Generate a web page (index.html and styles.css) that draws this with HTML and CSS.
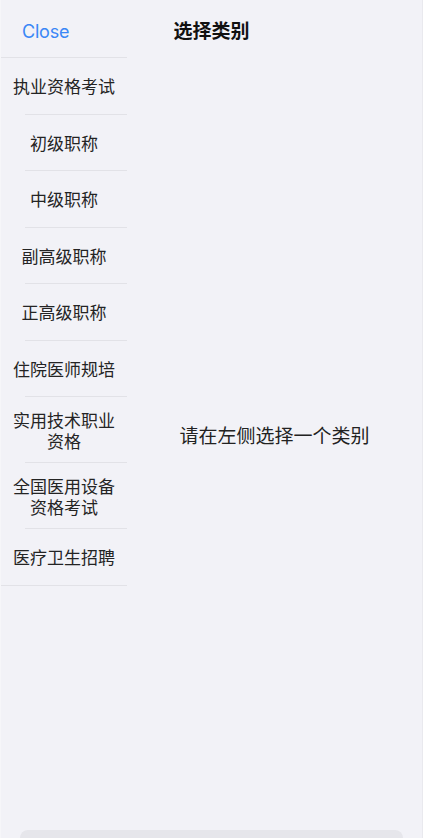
FILE: index.html
```html
<!DOCTYPE html>
<html lang="zh-CN">
<head>
<meta charset="utf-8">
<title>选择类别</title>
<link rel="stylesheet" href="styles.css">
</head>
<body>
<div class="screen">
  <header class="nav">
    <a class="close">Close</a>
    <h1 class="title">选择类别</h1>
    <span class="spacer"></span>
  </header>
  <main class="body">
    <ul class="cats">
      <li class="cat">执业资格考试</li>
      <li class="cat">初级职称</li>
      <li class="cat">中级职称</li>
      <li class="cat">副高级职称</li>
      <li class="cat">正高级职称</li>
      <li class="cat">住院医师规培</li>
      <li class="cat tall">实用技术职业<br>资格</li>
      <li class="cat tall">全国医用设备<br>资格考试</li>
      <li class="cat last">医疗卫生招聘</li>
    </ul>
    <section class="pane">
      <p class="hint">请在左侧选择一个类别</p>
    </section>
  </main>
  <div class="bottom-bar"></div>
</div>
</body>
</html>
```

FILE: styles.css
```css
* { box-sizing: border-box; }
html, body { margin: 0; padding: 0; }
body {
  background: #f2f2f7;
  font-family: Inter, "Noto Sans CJK SC", sans-serif;
  color: #222;
}
.screen {
  width: 423px;
  height: 838px;
  display: flex;
  flex-direction: column;
  overflow: hidden;
  border-left: 1px solid #f6f6f9;
  border-right: 1px solid #e9e9ee;
}
.nav {
  height: 57px;
  flex: none;
  display: grid;
  grid-template-columns: 1fr auto 1fr;
  align-items: center;
  padding: 7px 0 0 0;
}
.close {
  font-family: Inter, "Noto Sans", sans-serif;
  font-size: 18px;
  color: #3a87f6;
  justify-self: start;
  margin-left: 21px;
  letter-spacing: -0.2px;
  padding-bottom: 1px;
}
.title {
  margin: 0;
  font-family: "Noto Sans CJK SC", sans-serif;
  font-size: 19px;
  font-weight: 700;
  color: #111;
  padding-bottom: 5px;
}
.body {
  flex: 1;
  display: grid;
  grid-template-columns: 126px 1fr;
  min-height: 0;
}
.cats {
  list-style: none;
  margin: 0;
  padding: 0;
  border-top: 1px solid #e2e2e7;
  align-self: start;
}
.cat {
  height: 56.5px;
  display: flex;
  align-items: center;
  justify-content: center;
  text-align: center;
  font-family: "Noto Sans CJK SC", sans-serif;
  font-size: 17px;
  line-height: 21px;
  color: #242424;
  padding-bottom: 1px;
  background: linear-gradient(#e2e2e7, #e2e2e7) no-repeat 24px 100% / calc(100% - 24px) 1px;
}
.cat.tall { height: 66px; }
.cat.last {
  background: linear-gradient(#e2e2e7, #e2e2e7) no-repeat 0 100% / 100% 1px;
}
.pane {
  display: flex;
  align-items: center;
  justify-content: center;
}
.hint {
  margin: 0 0 18px 0;
  font-family: "Noto Sans CJK SC", sans-serif;
  font-size: 19px;
  color: #222;
}
.bottom-bar {
  flex: none;
  height: 8px;
  margin: 0 19px 0 19px;
  background: #e6e6eb;
  border-radius: 10px 10px 0 0;
}
```
